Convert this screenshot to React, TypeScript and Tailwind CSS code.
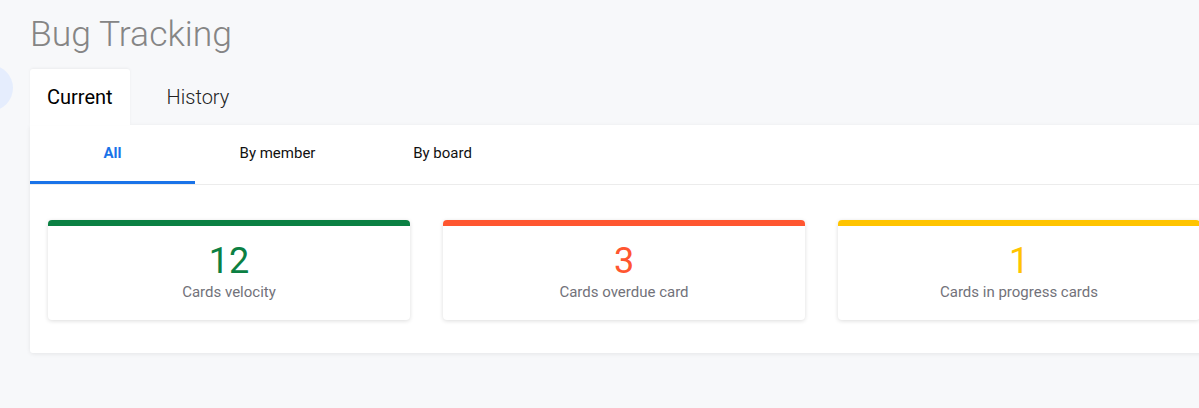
import React, { useState } from "react";

const stats = [
  { value: 12, label: "Cards velocity", bar: "bg-[#0b8043]", text: "text-[#0b8043]" },
  { value: 3, label: "Cards overdue card", bar: "bg-[#ff5630]", text: "text-[#ff5630]" },
  { value: 1, label: "Cards in progress cards", bar: "bg-[#ffc400]", text: "text-[#ffc400]" },
];

const subTabs = ["All", "By member", "By board"];

const App = () => {
  const [tab, setTab] = useState("Current");
  const [subTab, setSubTab] = useState("All");

  return (
    <div className="relative h-[408px] w-full overflow-hidden bg-[#f7f8fa] font-['Roboto',sans-serif]">
      {/* floating bubble peeking in from the left edge */}
      <div className="absolute left-[-10px] top-[65px] h-[46px] w-[23px] rounded-r-full bg-[#e5edfd]" />

      <div className="w-[1260px] pl-[30px]">
        <h1 className="pt-[14px] text-[35.5px] font-light leading-[40px] text-[#858585]">Bug Tracking</h1>

        <div className="mt-[15px] flex">
          {["Current", "History"].map((t) => (
            <button
              key={t}
              onClick={() => setTab(t)}
              className={`h-[56px] rounded-t-[3px] text-[20px] ${
                tab === t
                  ? "bg-white px-[17px] font-normal text-black shadow-[0_-1px_3px_rgba(0,0,0,0.05)]"
                  : "px-[37px] font-light text-[#222]"
              }`}
            >
              {t}
            </button>
          ))}
        </div>

        <div className="w-[1188px] rounded-b-[3px] bg-white shadow-[0_1px_4px_rgba(0,0,0,0.08)]">
          <div className="flex border-b border-[#ececec]">
            {subTabs.map((s) => (
              <button
                key={s}
                onClick={() => setSubTab(s)}
                className={`flex h-[59px] w-[165px] items-center justify-center border-b-[3px] text-[15px] ${
                  subTab === s
                    ? "border-[#1a73e8] font-bold text-[#1a73e8]"
                    : "border-transparent font-normal text-[#111]"
                }`}
              >
                {s}
              </button>
            ))}
          </div>

          <div className="flex gap-[33px] px-[18px] pb-[33px] pt-[35px]">
            {stats.map((s) => (
              <div
                key={s.label}
                className="h-[100px] w-[362px] overflow-hidden rounded-[4px] bg-white shadow-[0_1px_4px_rgba(0,0,0,0.14)]"
              >
                <div className={`h-[6px] ${s.bar}`} />
                <div className="flex flex-col items-center pt-[15px]">
                  <span className={`text-[36px] leading-[40px] ${s.text}`}>{s.value}</span>
                  <span className="mt-[1px] text-[15px] leading-[20px] text-[#72727a]">{s.label}</span>
                </div>
              </div>
            ))}
          </div>
        </div>
      </div>
    </div>
  );
};

export default App;
